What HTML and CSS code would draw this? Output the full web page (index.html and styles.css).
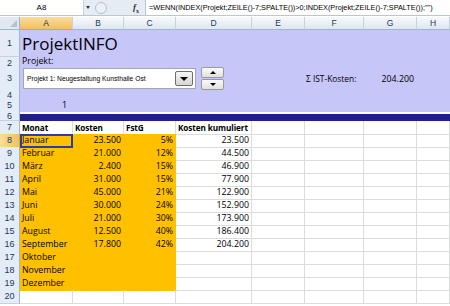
FILE: index.html
```html
<!DOCTYPE html>
<html>
<head>
	<title>ProjektINFO</title>
	<link rel="stylesheet" href="styles.css">
</head>
<body>
	<div class="formula-bar">
		<div class="name-box">A8</div>
		<div class="name-arrow"></div>
		<div class="grip"></div>
		<div class="fx"><i>f</i><sub>x</sub></div>
		<div class="formula">=WENN(INDEX(Projekt;ZEILE()-7;SPALTE())&gt;0;INDEX(Projekt;ZEILE()-7;SPALTE());"")</div>
	</div>

	<div class="sheet">
		<div class="row head">
			<div class="corner"></div>
			<div class="col sel">A</div>
			<div class="col">B</div>
			<div class="col">C</div>
			<div class="col">D</div>
			<div class="col">E</div>
			<div class="col">F</div>
			<div class="col">G</div>
			<div class="col">H</div>
		</div>

		<div class="row lav r1">
			<div class="rh">1</div>
			<div class="title">ProjektINFO</div>
		</div>
		<div class="row lav r2">
			<div class="rh">2</div>
			<div class="label">Projekt:</div>
		</div>
		<div class="row lav r3">
			<div class="rh">3</div>
			<div class="sum-label">&Sigma; IST-Kosten:</div>
			<div class="sum-value">204.200</div>
		</div>
		<div class="row lav r4">
			<div class="rh">4</div>
		</div>
		<div class="row lav r5">
			<div class="rh">5</div>
			<div class="num">1</div>
		</div>
		<div class="row r6">
			<div class="rh">6</div>
			<div class="band"></div>
		</div>

		<div class="row r7">
			<div class="rh">7</div>
			<div class="c b">Monat</div>
			<div class="c b">Kosten</div>
			<div class="c b">FstG</div>
			<div class="c b">Kosten kumuliert</div>
			<div class="c"></div><div class="c"></div><div class="c"></div><div class="c"></div>
		</div>
		<div class="row">
			<div class="rh sel">8</div>
			<div class="c o active">Januar</div>
			<div class="c o n">23.500</div>
			<div class="c o n">5%</div>
			<div class="c n">23.500</div>
			<div class="c"></div><div class="c"></div><div class="c"></div><div class="c"></div>
		</div>
		<div class="row">
			<div class="rh">9</div>
			<div class="c o">Februar</div>
			<div class="c o n">21.000</div>
			<div class="c o n">12%</div>
			<div class="c n">44.500</div>
			<div class="c"></div><div class="c"></div><div class="c"></div><div class="c"></div>
		</div>
		<div class="row">
			<div class="rh">10</div>
			<div class="c o">März</div>
			<div class="c o n">2.400</div>
			<div class="c o n">15%</div>
			<div class="c n">46.900</div>
			<div class="c"></div><div class="c"></div><div class="c"></div><div class="c"></div>
		</div>
		<div class="row">
			<div class="rh">11</div>
			<div class="c o">April</div>
			<div class="c o n">31.000</div>
			<div class="c o n">15%</div>
			<div class="c n">77.900</div>
			<div class="c"></div><div class="c"></div><div class="c"></div><div class="c"></div>
		</div>
		<div class="row">
			<div class="rh">12</div>
			<div class="c o">Mai</div>
			<div class="c o n">45.000</div>
			<div class="c o n">21%</div>
			<div class="c n">122.900</div>
			<div class="c"></div><div class="c"></div><div class="c"></div><div class="c"></div>
		</div>
		<div class="row">
			<div class="rh">13</div>
			<div class="c o">Juni</div>
			<div class="c o n">30.000</div>
			<div class="c o n">24%</div>
			<div class="c n">152.900</div>
			<div class="c"></div><div class="c"></div><div class="c"></div><div class="c"></div>
		</div>
		<div class="row">
			<div class="rh">14</div>
			<div class="c o">Juli</div>
			<div class="c o n">21.000</div>
			<div class="c o n">30%</div>
			<div class="c n">173.900</div>
			<div class="c"></div><div class="c"></div><div class="c"></div><div class="c"></div>
		</div>
		<div class="row">
			<div class="rh">15</div>
			<div class="c o">August</div>
			<div class="c o n">12.500</div>
			<div class="c o n">40%</div>
			<div class="c n">186.400</div>
			<div class="c"></div><div class="c"></div><div class="c"></div><div class="c"></div>
		</div>
		<div class="row">
			<div class="rh">16</div>
			<div class="c o">September</div>
			<div class="c o n">17.800</div>
			<div class="c o n">42%</div>
			<div class="c n">204.200</div>
			<div class="c"></div><div class="c"></div><div class="c"></div><div class="c"></div>
		</div>
		<div class="row">
			<div class="rh">17</div>
			<div class="c o">Oktober</div>
			<div class="c o"></div>
			<div class="c o"></div>
			<div class="c"></div>
			<div class="c"></div><div class="c"></div><div class="c"></div><div class="c"></div>
		</div>
		<div class="row">
			<div class="rh">18</div>
			<div class="c o">November</div>
			<div class="c o"></div>
			<div class="c o"></div>
			<div class="c"></div>
			<div class="c"></div><div class="c"></div><div class="c"></div><div class="c"></div>
		</div>
		<div class="row">
			<div class="rh">19</div>
			<div class="c o">Dezember</div>
			<div class="c o"></div>
			<div class="c o"></div>
			<div class="c"></div>
			<div class="c"></div><div class="c"></div><div class="c"></div><div class="c"></div>
		</div>
		<div class="row">
			<div class="rh">20</div>
			<div class="c"></div><div class="c"></div><div class="c"></div><div class="c"></div>
			<div class="c"></div><div class="c"></div><div class="c"></div><div class="c"></div>
		</div>

		<!-- form controls floating over the sheet -->
		<div class="combo">
			<span>Projekt 1: Neugestaltung Kunsthalle Ost</span>
			<div class="combo-btn"><div class="tri-down"></div></div>
		</div>
		<div class="spin">
			<div class="spin-half"><div class="tri-up small"></div></div>
			<div class="spin-half"><div class="tri-down small"></div></div>
		</div>
	</div>
</body>
</html>
```

FILE: styles.css
```css
body {
	margin: 0;
	padding: 0;
	width: 450px;
	height: 306px;
	overflow: hidden;
	font-family: "Open Sans", "Liberation Sans", sans-serif;
	font-size: 8.8px;
	color: #000;
	background: #fff;
}

/* formula bar */
.formula-bar {
	display: flex;
	align-items: center;
	height: 16px;
	background: #e6ecf4;
	border-bottom: 1px solid #b7c6da;
	box-sizing: border-box;
}
.name-box {
	width: 84px;
	height: 15px;
	background: #fff;
	border-right: 1px solid #c8d2df;
	box-sizing: border-box;
	text-align: center;
	font-family: "Liberation Sans", sans-serif;
	font-size: 8px;
	line-height: 15px;
}
.name-arrow {
	width: 0;
	height: 0;
	margin-left: 2px;
	border-left: 2px solid transparent;
	border-right: 2px solid transparent;
	border-top: 3px solid #333;
}
.grip {
	width: 12px;
	height: 12px;
	margin-left: 5px;
	border-radius: 6px;
	border: 1px solid #b5bfcc;
	background: #edf1f6;
	box-sizing: border-box;
}
.fx {
	width: 12px;
	margin-left: 26px;
	font-family: "Liberation Serif", serif;
	font-size: 9px;
	font-weight: bold;
	color: #333;
}
.fx sub {
	font-size: 6px;
}
.formula {
	flex: 1;
	height: 15px;
	margin-left: 0;
	padding-left: 3px;
	background: #fff;
	border-left: 1px solid #b7c6da;
	font-family: "Liberation Sans", sans-serif;
	font-size: 7.3px;
	line-height: 15px;
	white-space: nowrap;
	overflow: hidden;
}

/* sheet grid */
.sheet {
	position: relative;
	margin-top: 1px;
}
.row {
	display: grid;
	grid-template-columns: 20px 53px 51px 52px 76px 53px 59px 53px 33px;
	height: 13px;
}
.row > div {
	box-sizing: border-box;
	white-space: nowrap;
	line-height: 13px;
}
.head > div {
	border-right: 1px solid #c5d1e0;
	border-bottom: 1px solid #9eb6ce;
	background: linear-gradient(#f7f9fc, #dfe6f0);
	text-align: center;
	color: #1e395b;
	font-family: "Liberation Sans", sans-serif;
	font-size: 8.5px;
	line-height: 12px;
}
.head .corner {
	position: relative;
	background: #e1e8f2;
	border-right: 1px solid #9eb6ce;
}
.corner::after {
	content: "";
	position: absolute;
	right: 2px;
	bottom: 2px;
	border-left: 7px solid transparent;
	border-bottom: 7px solid #b5c1d1;
}
.head .sel {
	background: linear-gradient(#f9dc9c, #f1c15f);
	border-bottom: 1px solid #e3a33b;
	color: #1e2d40;
}

.rh {
	background: #e4ecf7;
	border-right: 1px solid #9eb6ce;
	border-bottom: 1px solid #c5d1e0;
	text-align: center;
	color: #1e395b;
	font-family: "Liberation Sans", sans-serif;
	font-size: 9px;
}
.rh.sel {
	background: linear-gradient(90deg, #f9dc9c, #f1c15f);
	border-right: 1px solid #e3a33b;
}

/* lavender header block */
.lav {
	background: #c6c6f9;
}
.r1 { height: 27px; }
.r2 { height: 10px; }
.r3 { height: 22px; }
.r4 { height: 10px; }
.r5 { height: 13px; }
.r6 { height: 9px; }
.lav .rh {
	display: flex;
	align-items: center;
	justify-content: center;
}
.title {
	grid-column: 2 / 6;
	padding-left: 2px;
	font-size: 17px;
	line-height: 27px !important;
}
.label {
	grid-column: 2 / 4;
	padding-left: 2px;
	line-height: 8px !important;
}
.sum-label {
	grid-column: 7;
	padding-left: 1px;
	font-size: 8.4px;
	line-height: 24px !important;
}
.sum-value {
	grid-column: 8;
	text-align: right;
	padding-right: 3px;
	line-height: 24px !important;
}
.num {
	grid-column: 2;
	text-align: right;
	padding-right: 6px;
}
.r6 .rh {
	line-height: 8px;
	overflow: hidden;
}
.band {
	grid-column: 2 / -1;
	margin-top: 2px;
	background: #202088;
}

/* data cells */
.c {
	border-right: 1px solid #dadcdd;
	border-bottom: 1px solid #dadcdd;
	padding: 0 2px;
	overflow: visible;
}
.c.b {
	font-weight: bold;
	font-size: 8.2px;
	letter-spacing: -0.1px;
}
.c.n {
	text-align: right;
}
.c.o {
	background: #ffc000;
	border-color: #ffc000;
}
.c.active {
	outline: 2px solid #2a3fa6;
	outline-offset: -2px;
	position: relative;
}

/* form controls */
.combo {
	position: absolute;
	left: 23px;
	top: 51px;
	width: 173px;
	height: 21px;
	display: flex;
	align-items: center;
	background: #fff;
	border: 1px solid #a0a8b4;
	box-sizing: border-box;
}
.combo span {
	flex: 1;
	padding-left: 3px;
	font-family: "Liberation Sans", sans-serif;
	font-size: 6.7px;
}
.combo-btn {
	width: 18px;
	height: 15px;
	margin-right: 2px;
	display: flex;
	align-items: center;
	justify-content: center;
	background: linear-gradient(#f6f6f6, #d6d6d6);
	border: 1px solid #6f6f6f;
	border-radius: 2px;
	box-sizing: border-box;
}
.tri-down {
	width: 0;
	height: 0;
	border-left: 4px solid transparent;
	border-right: 4px solid transparent;
	border-top: 4px solid #000;
}
.tri-up {
	width: 0;
	height: 0;
	border-left: 4px solid transparent;
	border-right: 4px solid transparent;
	border-bottom: 4px solid #000;
}
.tri-down.small, .tri-up.small {
	border-left-width: 3px;
	border-right-width: 3px;
}
.tri-down.small { border-top-width: 3px; }
.tri-up.small { border-bottom-width: 3px; }
.spin {
	position: absolute;
	left: 201px;
	top: 50px;
	width: 23px;
	height: 23px;
	display: flex;
	flex-direction: column;
	gap: 1px;
}
.spin-half {
	flex: 1;
	display: flex;
	align-items: center;
	justify-content: center;
	background: linear-gradient(#fbfbfb, #e0e0e0);
	border: 1px solid #9a9a9a;
	border-radius: 2px;
	box-sizing: border-box;
}
```
